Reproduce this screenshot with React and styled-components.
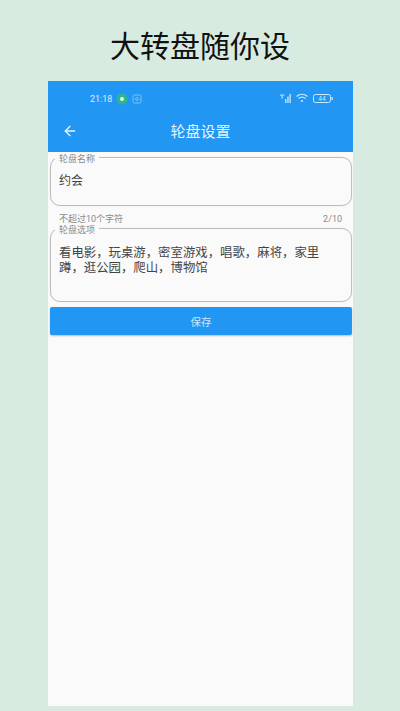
import styled, { createGlobalStyle } from "styled-components";
import { ArrowLeft } from "lucide-react";

const GlobalStyle = createGlobalStyle`
    html, body {
        margin: 0;
        padding: 0;
        background-color: #D7EBE1;
    }
`;

const Page = styled.div`
    width: 400px;
    height: 711px;
    overflow: hidden;

    display: flex;
    flex-direction: column;
    align-items: center;

    font-family: "Roboto", "Noto Sans CJK SC", sans-serif;
    background-color: #D7EBE1;
`;

const Headline = styled.h1`
    height: 81px;
    margin: 0;
    padding-top: 28px;
    box-sizing: border-box;

    font-size: 30px;
    line-height: 38px;
    font-weight: 400;
    color: #111;
`;

const Phone = styled.div`
    width: 305px;
    height: 625px;
    margin-left: 1px;

    display: flex;
    flex-direction: column;

    background-color: #FAFAFA;
`;

const AppBar = styled.header`
    height: 71px;
    flex-shrink: 0;

    display: flex;
    flex-direction: column;

    color: #FFF;
    background-color: #2196F3;
`;

const StatusBar = styled.div`
    height: 36px;
    padding: 12px 20px 0 42px;
    box-sizing: border-box;

    display: flex;
    align-items: flex-start;
    justify-content: space-between;
`;

const StatusGroup = styled.div`
    display: flex;
    align-items: center;
    gap: ${(props) => props.$gap}px;
`;

const Time = styled.span`
    font-size: 9px;
    line-height: 12px;
    color: #DCEFFD;
`;

const Toolbar = styled.div`
    position: relative;
    flex: 1;
    padding: 0 0 8px 14px;

    display: flex;
    align-items: center;
    justify-content: center;
`;

const BackButton = styled.span`
    position: absolute;
    left: 14px;
    top: 6px;
    display: flex;
`;

const ToolbarTitle = styled.h2`
    margin: 0 14px 0 0;
    font-size: 15px;
    font-weight: 400;
    color: #E8F4FE;
`;

const Form = styled.div`
    padding: 5px 1px 0 2px;

    display: flex;
    flex-direction: column;
`;

const Field = styled.div`
    position: relative;
    height: ${(props) => props.$height}px;
    padding: 16px 24px 0 8px;
    box-sizing: border-box;

    border: 1px solid #BDBDBD;
    border-radius: 10px;
    box-shadow: 0 0 1px #CCC;
`;

const FieldLabel = styled.label`
    position: absolute;
    left: 4px;
    top: -4px;
    padding: 0 4px;

    font-size: 9px;
    line-height: 11px;
    color: #8A8A8A;
    background-color: #FAFAFA;
`;

const FieldValue = styled.div`
    font-size: ${(props) => props.$size}px;
    line-height: 15px;
    color: #444;
`;

const Helper = styled.div`
    height: 22px;
    padding: 7px 10px 0 9px;
    box-sizing: border-box;

    display: flex;
    justify-content: space-between;

    font-size: 9px;
    line-height: 12px;
    color: #8A8A8A;
`;

const SaveButton = styled.button`
    height: 28px;
    margin-top: 5px;
    padding: 0;

    font-family: inherit;
    font-size: 10.5px;
    color: #CDE7FB;
    background-color: #2196F3;
    border: none;
    border-radius: 2px;
    box-shadow: 0 1px 2px rgba(0, 0, 0, 0.25);
`;

const WifiIcon = () => (
    <svg width="12" height="10" viewBox="0 0 12 10" fill="none" stroke="#CFE8FB" strokeWidth="1.3">
        <path d="M0.6 3.4C3.8 0.6 8.2 0.6 11.4 3.4" />
        <path d="M2.6 5.6C4.6 3.9 7.4 3.9 9.4 5.6" />
        <circle cx="6" cy="8" r="1.1" fill="#CFE8FB" stroke="none" />
    </svg>
);

const SignalIcon = () => (
    <svg width="11" height="9" viewBox="0 0 11 9" fill="#B5DCF9">
        <rect x="0" y="0.5" width="4.5" height="1.2" />
        <rect x="1.5" y="1.7" width="1.3" height="3" />
        <rect x="5" y="5" width="1.5" height="4" />
        <rect x="7.2" y="2.5" width="1.5" height="6.5" />
        <rect x="9.4" y="0" width="1.5" height="9" />
    </svg>
);

const BatteryIcon = () => (
    <svg width="20" height="9" viewBox="0 0 20 9">
        <rect x="0.5" y="0.5" width="17" height="8" rx="2" fill="none" stroke="#CFE8FB" />
        <rect x="18.5" y="3" width="1.3" height="3" fill="#CFE8FB" />
        <text x="9" y="7" fontSize="6.5" textAnchor="middle" fill="#CFE8FB" fontFamily="Roboto">44</text>
    </svg>
);

const BadgeIcon = () => (
    <svg width="12" height="12" viewBox="0 0 12 12">
        <circle cx="6" cy="6" r="5.5" fill="#2DB58C" />
        <circle cx="6" cy="6" r="2" fill="#E6F6F0" />
    </svg>
);

const ShotIcon = () => (
    <svg width="10" height="10" viewBox="0 0 10 10" fill="none" stroke="#7CC4F7">
        <rect x="1" y="1" width="8" height="8" rx="1.5" />
        <circle cx="5" cy="5" r="1.4" />
    </svg>
);

const App = () => {
    return (
        <Page>
            <GlobalStyle />
            <Headline>大转盘随你设</Headline>
            <Phone>
                <AppBar>
                    <StatusBar>
                        <StatusGroup $gap={4}>
                            <Time>21:18</Time>
                            <BadgeIcon />
                            <ShotIcon />
                        </StatusGroup>
                        <StatusGroup $gap={5}>
                            <SignalIcon />
                            <WifiIcon />
                            <BatteryIcon />
                        </StatusGroup>
                    </StatusBar>
                    <Toolbar>
                        <BackButton>
                            <ArrowLeft size={16} color="#E8F4FE" strokeWidth={2} />
                        </BackButton>
                        <ToolbarTitle>轮盘设置</ToolbarTitle>
                    </Toolbar>
                </AppBar>
                <Form>
                    <Field $height={49}>
                        <FieldLabel>轮盘名称</FieldLabel>
                        <FieldValue $size={12}>约会</FieldValue>
                    </Field>
                    <Helper>
                        <span>不超过10个字符</span>
                        <span>2/10</span>
                    </Helper>
                    <Field $height={74}>
                        <FieldLabel>轮盘选项</FieldLabel>
                        <FieldValue $size={12.4}>看电影，玩桌游，密室游戏，唱歌，麻将，家里蹲，逛公园，爬山，博物馆</FieldValue>
                    </Field>
                    <SaveButton>保存</SaveButton>
                </Form>
            </Phone>
        </Page>
    );
};

export default App;
